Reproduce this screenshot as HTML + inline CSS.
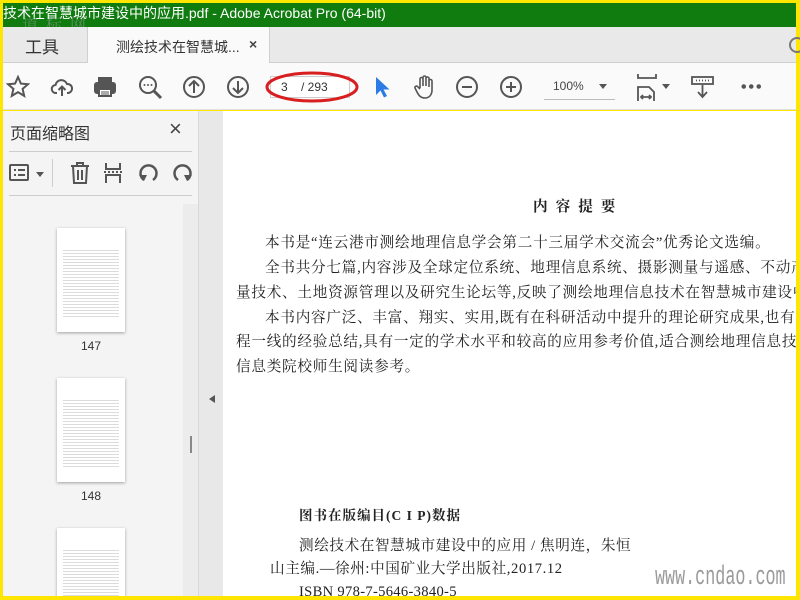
<!DOCTYPE html>
<html><head><meta charset="utf-8"><style>
*{margin:0;padding:0;box-sizing:border-box}
html,body{width:800px;height:600px;overflow:hidden}
body{background:#ffe600;position:relative;font-family:"Liberation Sans","Noto Sans CJK SC",sans-serif}
.abs{position:absolute}
#title{left:3px;top:3px;width:793px;height:24px;background:#107c10;color:#fff;font-size:14px;line-height:20px;white-space:nowrap}
#tabs{left:3px;top:27px;width:793px;height:36px;background:#e9e9e9;border-bottom:1px solid #cfcfcf}
#tb{left:3px;top:63px;width:793px;height:47px;background:#fafafa;border-bottom:1px solid #e0e0e0}
#side{left:3px;top:111px;width:195px;height:485px;background:#f4f4f4;overflow:hidden}
#div{left:198px;top:111px;width:25px;height:485px;background:#e8e8e8;border-left:1px solid #d8d8d8}
#page{left:223px;top:111px;width:573px;height:485px;background:#fff;overflow:hidden;font-family:"Liberation Serif","Noto Serif CJK SC",serif;color:#222;white-space:nowrap}
.ln{position:absolute;font-size:14.6px;letter-spacing:0.75px;left:0;line-height:18px}
.th{position:absolute;width:68px;height:104px;background-color:#fff;box-shadow:0 1px 3px rgba(0,0,0,.35);
background-image:repeating-linear-gradient(#fff 0 2px,#dcdcdc 2px 3px);background-size:56px 70px;background-repeat:no-repeat;background-position:6px 20px}
.num{position:absolute;font-size:12px;color:#333;width:68px;text-align:center}
svg.i{position:absolute;fill:none;stroke:#555;stroke-width:2}
</style></head><body>
<div id="title" class="abs">技术在智慧城市建设中的应用.pdf - Adobe Acrobat Pro (64-bit)</div>
<div id="tabs" class="abs">
 <div class="abs" style="left:22px;top:6px;font-size:17px;color:#333">工具</div>
 <div class="abs" style="left:84px;top:0;width:183px;height:37px;background:#fafafa;border-left:1px solid #d0d0d0;border-right:1px solid #d0d0d0"></div>
 <div class="abs" style="left:113px;top:10px;font-size:14px;color:#333">测绘技术在智慧城...</div>
 <div class="abs" style="left:246px;top:9px;font-size:14px;color:#444;font-weight:bold">×</div>
 <div class="abs" style="left:786px;top:10px;width:16px;height:16px;border:2px solid #777;border-radius:50%"></div>
</div>
<div class="abs" style="left:22px;top:17px;color:#8a9a8a;font-size:16px;font-family:'Liberation Serif','Noto Serif CJK SC',serif;opacity:.6;letter-spacing:2px;height:10px;overflow:hidden;line-height:18px">道 标 网</div>
<div id="tb" class="abs"></div>
<svg class="i" style="left:6px;top:75px" width="24" height="24" viewBox="0 0 24 24"><path d="M12 2l2.9 6.6 7.1.6-5.4 4.7 1.6 7-6.2-3.7-6.2 3.7 1.6-7L2 9.2l7.1-.6z"/></svg>
<svg class="i" style="left:50px;top:75px" width="24" height="24" viewBox="0 0 24 24"><path d="M7 18H6a4 4 0 0 1-.5-8 6 6 0 0 1 11.5-1A4.5 4.5 0 0 1 18 18h-1M12 21v-9M8.5 15l3.5-3.5 3.5 3.5"/></svg>
<svg class="i" style="left:93px;top:75px" width="24" height="24" viewBox="0 0 24 24"><rect x="6" y="3" width="12" height="5" fill="#555"/><rect x="2" y="8" width="20" height="10" rx="2" fill="#555"/><rect x="6" y="14" width="12" height="7" fill="#fff"/><path d="M8 17h8M8 19h8" stroke-width="1"/></svg>
<svg class="i" style="left:138px;top:75px" width="26" height="26" viewBox="0 0 26 26"><circle cx="10" cy="10" r="8"/><path d="M16 16l7 7" stroke-width="3"/><circle cx="6.5" cy="10" r="1" fill="#555" stroke="none"/><circle cx="10" cy="10" r="1" fill="#555" stroke="none"/><circle cx="13.5" cy="10" r="1" fill="#555" stroke="none"/></svg>
<svg class="i" style="left:182px;top:75px" width="24" height="24" viewBox="0 0 24 24"><circle cx="12" cy="12" r="10"/><path d="M12 18V6M7 11l5-5 5 5"/></svg>
<svg class="i" style="left:226px;top:75px" width="24" height="24" viewBox="0 0 24 24"><circle cx="12" cy="12" r="10"/><path d="M12 6v12M7 13l5 5 5-5"/></svg>
<div class="abs" style="left:270px;top:76px;width:80px;height:22px;border:1px solid #ccc;background:#fff;font-size:12px;color:#333;line-height:20px;padding-left:10px">3&nbsp;&nbsp;&nbsp;&nbsp;/ 293</div>
<svg class="abs" style="left:262px;top:68px" width="100" height="38" viewBox="0 0 100 38"><ellipse cx="50" cy="19" rx="45" ry="14" fill="none" stroke="#d81e1e" stroke-width="3"/></svg>
<svg class="abs" style="left:373px;top:75px" width="18" height="24" viewBox="0 0 18 24"><path d="M3 2v18l4.5-4.5 3.5 7 3-1.5-3.5-6.5h6z" fill="#2d7be5"/></svg>
<svg class="i" style="left:412px;top:74px" width="26" height="26" viewBox="0 0 26 26"><path d="M8 14V5a1.5 1.5 0 0 1 3 0v7V3.5a1.5 1.5 0 0 1 3 0V12V4.5a1.5 1.5 0 0 1 3 0V13V7a1.5 1.5 0 0 1 3 0v9c0 5-3 8-7 8s-6-2-8-6l-2-4a1.5 1.5 0 0 1 2.5-1.5L8 15" stroke-width="1.6"/></svg>
<svg class="i" style="left:455px;top:75px" width="24" height="24" viewBox="0 0 24 24"><circle cx="12" cy="12" r="10"/><path d="M7 12h10"/></svg>
<svg class="i" style="left:499px;top:75px" width="24" height="24" viewBox="0 0 24 24"><circle cx="12" cy="12" r="10"/><path d="M7 12h10M12 7v10"/></svg>
<div class="abs" style="left:553px;top:79px;font-size:12px;color:#444">100%</div>
<div class="abs" style="left:599px;top:84px;border:4px solid transparent;border-top:5px solid #555"></div>
<div class="abs" style="left:544px;top:99px;width:71px;height:1px;background:#bbb"></div>
<svg class="i" style="left:636px;top:73px" width="24" height="28" viewBox="0 0 24 28"><path d="M2 1v4h18V1M2 28V14h11l5 5v9M5 24h10M7 22l-2 2 2 2M13 22l2 2-2 2" stroke-width="1.8"/></svg>
<div class="abs" style="left:662px;top:84px;border:4px solid transparent;border-top:5px solid #555"></div>
<svg class="i" style="left:690px;top:75px" width="26" height="26" viewBox="0 0 26 26"><rect x="2" y="2" width="21" height="7" stroke-width="1.8"/><path d="M6 5.5h1M9 5.5h1M12 5.5h1M15 5.5h1M18 5.5h1M12.5 10v12M8 17l4.5 5 4.5-5" stroke-width="1.8"/></svg>
<div class="abs" style="left:740px;top:84px;width:22px;height:5px;background:radial-gradient(circle,#555 2px,transparent 2.5px) 0 0/7.5px 5px repeat-x"></div>

<div id="side" class="abs">
 <div class="abs" style="left:7px;top:9px;font-size:16px;color:#333">页面缩略图</div>
 <div class="abs" style="left:166px;top:5px;font-size:22px;color:#444">×</div>
 <div class="abs" style="left:6px;top:40px;width:183px;height:1px;background:#ccc"></div>
 <div class="abs" style="left:6px;top:84px;width:183px;height:1px;background:#ccc"></div>
 <svg class="i" style="left:6px;top:52px" width="22" height="20" viewBox="0 0 22 20"><rect x="1" y="2" width="18" height="15" rx="1"/><path d="M5 7h2M5 12h2M9 7h7M9 12h7"/></svg>
 <div class="abs" style="left:33px;top:61px;border:4px solid transparent;border-top:5px solid #555"></div>
 <div class="abs" style="left:49px;top:48px;width:1px;height:28px;background:#ccc"></div>
 <svg class="i" style="left:66px;top:50px" width="22" height="24" viewBox="0 0 22 24"><path d="M2 5h18M8 5V2h6v3M4 5l1 17h12l1-17M9 9v10M13 9v10"/></svg>
 <svg class="i" style="left:100px;top:51px" width="22" height="22" viewBox="0 0 22 22"><path d="M3 1v6h14V1M3 21v-8h14v8M1 10h2M5 10h2M9 10h2M13 10h2M17 10h2"/></svg>
 <svg class="i" style="left:134px;top:50px" width="24" height="24" viewBox="0 0 24 24"><path d="M7 19A8 8 0 1 1 16 19" stroke-width="2.5"/><path d="M2 14l5 6 3-6z" fill="#555" stroke="none"/></svg>
 <svg class="i" style="left:167px;top:50px" width="24" height="24" viewBox="0 0 24 24"><path d="M17 19A8 8 0 1 0 8 19" stroke-width="2.5"/><path d="M22 14l-5 6-3-6z" fill="#555" stroke="none"/></svg>
 <div class="abs" style="left:180px;top:93px;width:16px;height:392px;background:#ececec"></div>
 <div class="abs" style="left:187px;top:325px;width:2px;height:17px;background:#888"></div>
 <div class="th" style="left:54px;top:117px"></div><div class="num" style="left:54px;top:228px">147</div>
 <div class="th" style="left:54px;top:267px"></div><div class="num" style="left:54px;top:378px">148</div>
 <div class="th" style="left:54px;top:417px"></div>
</div>
<div id="div" class="abs"><div class="abs" style="left:10px;top:284px;border:4px solid transparent;border-right:6px solid #555;border-left:0"></div></div>
<div id="page" class="abs">
 <div class="ln" style="left:310px;top:87px;font-weight:bold;letter-spacing:8px">内容提要</div>
 <div class="ln" style="left:42px;top:123px">本书是“连云港市测绘地理信息学会第二十三届学术交流会”优秀论文选编。</div>
 <div class="ln" style="left:42px;top:148px">全书共分七篇,内容涉及全球定位系统、地理信息系统、摄影测量与遥感、不动产登记</div>
 <div class="ln" style="left:13px;top:173px">量技术、土地资源管理以及研究生论坛等,反映了测绘地理信息技术在智慧城市建设中的</div>
 <div class="ln" style="left:42px;top:198px">本书内容广泛、丰富、翔实、实用,既有在科研活动中提升的理论研究成果,也有来自</div>
 <div class="ln" style="left:13px;top:222px">程一线的经验总结,具有一定的学术水平和较高的应用参考价值,适合测绘地理信息技术</div>
 <div class="ln" style="left:13px;top:247px">信息类院校师生阅读参考。</div>
 <div class="ln" style="left:76px;top:396px;font-weight:bold;font-size:13.5px;letter-spacing:1px">图书在版编目(C I P)数据</div>
 <div class="ln" style="left:76px;top:426px;letter-spacing:0.6px">测绘技术在智慧城市建设中的应用 / 焦明连，朱恒</div>
 <div class="ln" style="left:47px;top:449px;letter-spacing:0.6px">山主编.—徐州:中国矿业大学出版社,2017.12</div>
 <div class="ln" style="left:76px;top:472px;letter-spacing:0.3px">ISBN 978-7-5646-3840-5</div>
 <div class="abs" style="left:432px;top:454px;font-family:'Liberation Mono',monospace;font-size:27px;line-height:27px;color:#9a9a9a;transform:scaleX(.62);transform-origin:left">www.cndao.com</div>
</div>
</body></html>
